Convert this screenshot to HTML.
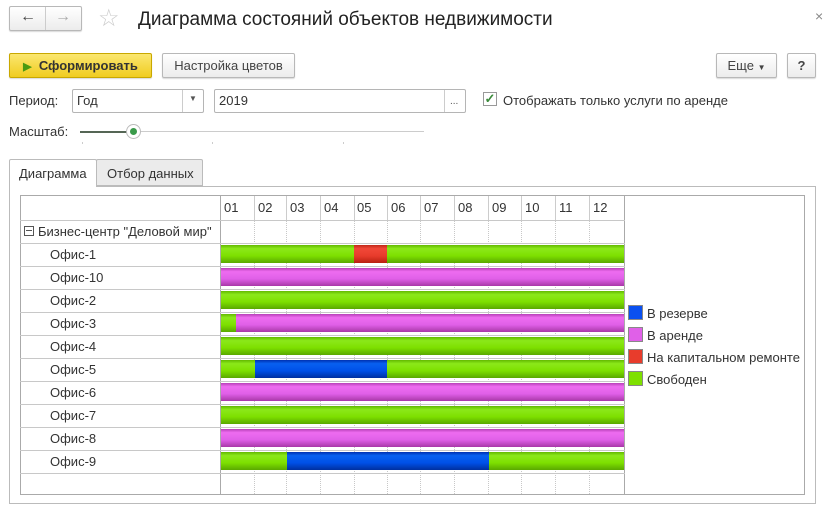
<!DOCTYPE html>
<html><head><meta charset="utf-8"><style>
*{box-sizing:border-box;margin:0;padding:0}
body{width:828px;height:512px;background:#fff;font-family:"Liberation Sans",Arial,sans-serif;color:#333;position:relative;overflow:hidden;font-size:12px}
.a{position:absolute}
.btn{position:absolute;border:1px solid #b8b8b8;border-radius:2px;background:linear-gradient(#fff,#ececec);box-shadow:0 1px 1px rgba(0,0,0,.15);font-size:13px;color:#444;text-align:center}
.inp{position:absolute;border:1px solid #b5b5b5;border-radius:2px;background:#fff;font-size:13px;color:#333;padding:3px 4px}
.vl{position:absolute;top:220px;width:0;border-left:1px dotted #c8c8c8;height:274px}
.hl{position:absolute;left:20px;width:605px;height:1px;background:#c8c8c8}
.lbl{position:absolute;left:50px;font-size:13px;color:#333}
.bar{position:absolute;height:18px}
.g{background:linear-gradient(#62b800,#8be81a 20%,#7ee000 60%,#5aa800)}
.m{background:linear-gradient(#b840b8,#ee6cf0 20%,#e060e8 60%,#a838a8)}
.r{background:linear-gradient(#c02818,#f04838 20%,#e83c2c 60%,#b82010)}
.b{background:linear-gradient(#0030b0,#0860f0 20%,#0050e8 60%,#0030a0)}
.mo{position:absolute;top:200px;font-size:13px;color:#333}
.sw{position:absolute;left:628px;width:15px;height:15px;border:1px solid #888}
.lt{position:absolute;left:647px;font-size:13px;color:#333}
</style></head><body>
<div class="btn" style="left:9px;top:6px;width:73px;height:25px"></div>
<div class="a" style="left:45px;top:7px;width:1px;height:23px;background:#ccc"></div>
<div class="a" style="left:20px;top:8px;font-size:16px;color:#444;font-weight:bold">&#8592;</div>
<div class="a" style="left:55px;top:8px;font-size:16px;color:#aaa;font-weight:bold">&#8594;</div>
<div class="a" style="left:98px;top:4px;font-size:24px;color:#ccc">&#9734;</div>
<div class="a" style="left:138px;top:9px;font-size:19px;color:#222">Диаграмма состояний объектов недвижимости</div>
<div class="a" style="left:815px;top:8px;font-size:14px;color:#888">×</div>

<div class="btn" style="left:9px;top:53px;width:143px;height:25px;background:linear-gradient(#fbe770,#f0cc20);border-color:#c9a800;font-weight:bold;color:#333;padding-top:4px"><span style="color:#4a9a10;font-size:11px">&#9654;</span>&nbsp; Сформировать</div>
<div class="btn" style="left:162px;top:53px;width:133px;height:25px;padding-top:4px">Настройка цветов</div>
<div class="btn" style="left:716px;top:53px;width:61px;height:25px;padding-top:4px">Еще <span style="font-size:8px">▼</span></div>
<div class="btn" style="left:787px;top:53px;width:29px;height:25px;padding-top:4px;font-weight:bold">?</div>

<div class="a" style="left:9px;top:93px;font-size:13px">Период:</div>
<div class="inp" style="left:72px;top:89px;width:132px;height:24px">Год</div>
<div class="a" style="left:182px;top:90px;width:1px;height:22px;background:#ccc"></div>
<div class="a" style="left:189px;top:94px;font-size:8px;color:#555">▼</div>
<div class="inp" style="left:214px;top:89px;width:252px;height:24px">2019</div>
<div class="a" style="left:444px;top:90px;width:1px;height:22px;background:#ccc"></div>
<div class="a" style="left:450px;top:96px;font-size:10px;color:#555">...</div>
<div class="a" style="left:483px;top:92px;width:14px;height:14px;border:1px solid #999;background:#fff;font-size:13px;line-height:12px;color:#3a8a3a;text-align:center;font-weight:bold">✓</div>
<div class="a" style="left:503px;top:93px;font-size:13px">Отображать только услуги по аренде</div>

<div class="a" style="left:9px;top:124px;font-size:13px">Масштаб:</div>
<div class="a" style="left:80px;top:131px;width:52px;height:2px;background:#556655"></div>
<div class="a" style="left:132px;top:131px;width:292px;height:1px;background:#ccc"></div>
<div class="a" style="left:126px;top:124px;width:15px;height:15px;border-radius:50%;border:1px solid #bbb;background:#fff"></div>
<div class="a" style="left:130px;top:128px;width:7px;height:7px;border-radius:50%;background:#3a9a4a"></div>
<div class="a" style="left:82px;top:142px;width:1px;height:2px;background:#ccc"></div>
<div class="a" style="left:212px;top:142px;width:1px;height:2px;background:#ccc"></div>
<div class="a" style="left:343px;top:142px;width:1px;height:2px;background:#ccc"></div>

<div class="a" style="left:9px;top:186px;width:807px;height:318px;border:1px solid #bbb"></div>
<div class="a" style="left:9px;top:159px;width:88px;height:28px;border:1px solid #bbb;border-bottom:none;background:#fff;border-radius:2px 2px 0 0;padding:6px 0 0 9px;font-size:13px">Диаграмма</div>
<div class="a" style="left:96px;top:159px;width:107px;height:27px;border:1px solid #bbb;background:#ebebeb;border-radius:2px 2px 0 0;padding:6px 0 0 10px;font-size:13px">Отбор данных</div>

<div class="a" style="left:20px;top:195px;width:785px;height:300px;border:1px solid #aaa"></div>
<div class="a" style="left:220px;top:195px;width:1px;height:300px;background:#aaa"></div>
<div class="a" style="left:624px;top:195px;width:1px;height:300px;background:#aaa"></div>
<div class="hl" style="top:220px"></div>
<div class="hl" style="top:243px"></div><div class="hl" style="top:266px"></div><div class="hl" style="top:289px"></div><div class="hl" style="top:312px"></div><div class="hl" style="top:335px"></div><div class="hl" style="top:358px"></div><div class="hl" style="top:381px"></div><div class="hl" style="top:404px"></div><div class="hl" style="top:427px"></div><div class="hl" style="top:450px"></div><div class="hl" style="top:473px"></div>
<div class="a" style="left:254px;top:196px;width:1px;height:24px;background:#ccc"></div><div class="vl" style="left:254px"></div>
<div class="a" style="left:286px;top:196px;width:1px;height:24px;background:#ccc"></div><div class="vl" style="left:286px"></div>
<div class="a" style="left:320px;top:196px;width:1px;height:24px;background:#ccc"></div><div class="vl" style="left:320px"></div>
<div class="a" style="left:354px;top:196px;width:1px;height:24px;background:#ccc"></div><div class="vl" style="left:354px"></div>
<div class="a" style="left:387px;top:196px;width:1px;height:24px;background:#ccc"></div><div class="vl" style="left:387px"></div>
<div class="a" style="left:420px;top:196px;width:1px;height:24px;background:#ccc"></div><div class="vl" style="left:420px"></div>
<div class="a" style="left:454px;top:196px;width:1px;height:24px;background:#ccc"></div><div class="vl" style="left:454px"></div>
<div class="a" style="left:488px;top:196px;width:1px;height:24px;background:#ccc"></div><div class="vl" style="left:488px"></div>
<div class="a" style="left:521px;top:196px;width:1px;height:24px;background:#ccc"></div><div class="vl" style="left:521px"></div>
<div class="a" style="left:555px;top:196px;width:1px;height:24px;background:#ccc"></div><div class="vl" style="left:555px"></div>
<div class="a" style="left:589px;top:196px;width:1px;height:24px;background:#ccc"></div><div class="vl" style="left:589px"></div>
<div class="mo" style="left:224px">01</div><div class="mo" style="left:258px">02</div><div class="mo" style="left:290px">03</div><div class="mo" style="left:324px">04</div><div class="mo" style="left:357px">05</div><div class="mo" style="left:391px">06</div><div class="mo" style="left:424px">07</div><div class="mo" style="left:458px">08</div><div class="mo" style="left:492px">09</div><div class="mo" style="left:525px">10</div><div class="mo" style="left:559px">11</div><div class="mo" style="left:593px">12</div>

<div class="a" style="left:24px;top:226px;width:10px;height:10px;border:1px solid #555"></div>
<div class="a" style="left:26px;top:230px;width:6px;height:1px;background:#555"></div>
<div class="a" style="left:38px;top:224px;font-size:13px">Бизнес-центр "Деловой мир"</div>
<div class="lbl" style="top:247px">Офис-1</div>
<div class="lbl" style="top:270px">Офис-10</div>
<div class="lbl" style="top:293px">Офис-2</div>
<div class="lbl" style="top:316px">Офис-3</div>
<div class="lbl" style="top:339px">Офис-4</div>
<div class="lbl" style="top:362px">Офис-5</div>
<div class="lbl" style="top:385px">Офис-6</div>
<div class="lbl" style="top:408px">Офис-7</div>
<div class="lbl" style="top:431px">Офис-8</div>
<div class="lbl" style="top:454px">Офис-9</div>

<div class="bar g" style="left:221px;top:245px;width:133px"></div><div class="bar r" style="left:354px;top:245px;width:33px"></div><div class="bar g" style="left:387px;top:245px;width:237px"></div>
<div class="bar m" style="left:221px;top:268px;width:403px"></div>
<div class="bar g" style="left:221px;top:291px;width:403px"></div>
<div class="bar g" style="left:221px;top:314px;width:15px"></div><div class="bar m" style="left:236px;top:314px;width:388px"></div>
<div class="bar g" style="left:221px;top:337px;width:403px"></div>
<div class="bar g" style="left:221px;top:360px;width:34px"></div><div class="bar b" style="left:255px;top:360px;width:132px"></div><div class="bar g" style="left:387px;top:360px;width:237px"></div>
<div class="bar m" style="left:221px;top:383px;width:403px"></div>
<div class="bar g" style="left:221px;top:406px;width:403px"></div>
<div class="bar m" style="left:221px;top:429px;width:403px"></div>
<div class="bar g" style="left:221px;top:452px;width:66px"></div><div class="bar b" style="left:287px;top:452px;width:202px"></div><div class="bar g" style="left:489px;top:452px;width:135px"></div>

<div class="sw" style="top:305px;background:#0a50f0"></div><div class="lt" style="top:306px">В резерве</div>
<div class="sw" style="top:327px;background:#e060e8"></div><div class="lt" style="top:328px">В аренде</div>
<div class="sw" style="top:349px;background:#e83c2c"></div><div class="lt" style="top:350px">На капитальном ремонте</div>
<div class="sw" style="top:371px;background:#7ee000"></div><div class="lt" style="top:372px">Свободен</div>
</body></html>
